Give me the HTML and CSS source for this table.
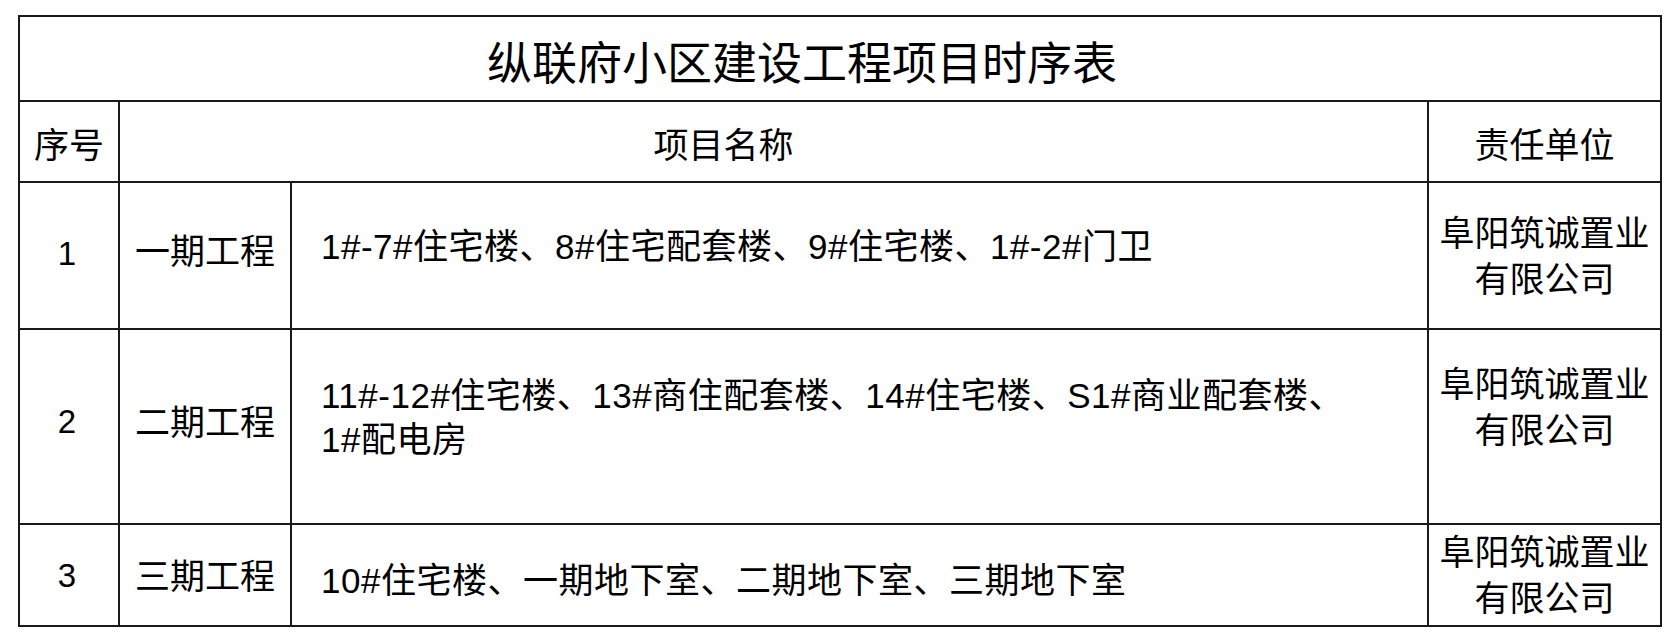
FILE: index.html
```html
<!DOCTYPE html>
<html lang="zh-CN">
<head>
<meta charset="utf-8">
<title>纵联府小区建设工程项目时序表</title>
<link rel="stylesheet" href="styles.css">
</head>
<body>
<div class="sheet">
  <div class="cell title">纵联府小区建设工程项目时序表</div>

  <div class="cell head">序号</div>
  <div class="cell head head-name">项目名称</div>
  <div class="cell head">责任单位</div>

  <div class="cell num">1</div>
  <div class="cell phase">一期工程</div>
  <div class="cell content">1#-7#住宅楼、8#住宅配套楼、9#住宅楼、1#-2#门卫</div>
  <div class="cell org">阜阳筑诚置业<br>有限公司</div>

  <div class="cell num num-lift">2</div>
  <div class="cell phase">二期工程</div>
  <div class="cell content">11#-12#住宅楼、13#商住配套楼、14#住宅楼、S1#商业配套楼、<br>1#配电房</div>
  <div class="cell org org-raised">阜阳筑诚置业<br>有限公司</div>

  <div class="cell num num-last">3</div>
  <div class="cell phase phase-last">三期工程</div>
  <div class="cell content content-low">10#住宅楼、一期地下室、二期地下室、三期地下室</div>
  <div class="cell org">阜阳筑诚置业<br>有限公司</div>
</div>
</body>
</html>
```

FILE: styles.css
```css
html, body {
  margin: 0;
  padding: 0;
  background: #ffffff;
}

body {
  font-family: "Liberation Sans", "Noto Sans CJK SC", sans-serif;
  color: #000000;
}

.sheet {
  margin: 15px 0 0 18px;
  width: 1640px;
  padding: 2px;
  background: #1a1a1a;
  display: grid;
  grid-template-columns: 98px 170px 1135px 231px;
  grid-template-rows: 83px 79px 145px 193px 100px;
  gap: 2px;
}

.cell {
  background: #ffffff;
  display: flex;
  align-items: center;
  justify-content: center;
  font-size: 35px;
  line-height: 45px;
  box-sizing: border-box;
}

.title {
  grid-column: 1 / 5;
  font-family: "Noto Sans CJK SC", sans-serif;
  font-size: 45px;
  padding: 4px 76px 0 0;
}

.head {
  font-family: "Noto Sans CJK SC", sans-serif;
  padding-top: 2px;
}

.head-name {
  grid-column: 2 / 4;
  padding-right: 100px;
}

.num {
  font-family: "Liberation Sans", sans-serif;
  font-size: 33px;
  padding: 0 4px 4px 0;
}

.num-lift {
  padding-bottom: 10px;
}

.num-last {
  padding-bottom: 0;
}

.phase {
  font-family: "Noto Sans CJK SC", sans-serif;
  padding-bottom: 14px;
}

.phase-last {
  padding-bottom: 4px;
}

.content {
  justify-content: flex-start;
  padding-left: 29px;
  padding-bottom: 17px;
  line-height: 44px;
  letter-spacing: 0.5px;
}

.content-low {
  padding-bottom: 0;
  padding-top: 12px;
}

.org {
  font-family: "Noto Sans CJK SC", sans-serif;
  text-align: center;
  line-height: 46px;
  padding-bottom: 4px;
}

.org-raised {
  padding-bottom: 44px;
}
```
